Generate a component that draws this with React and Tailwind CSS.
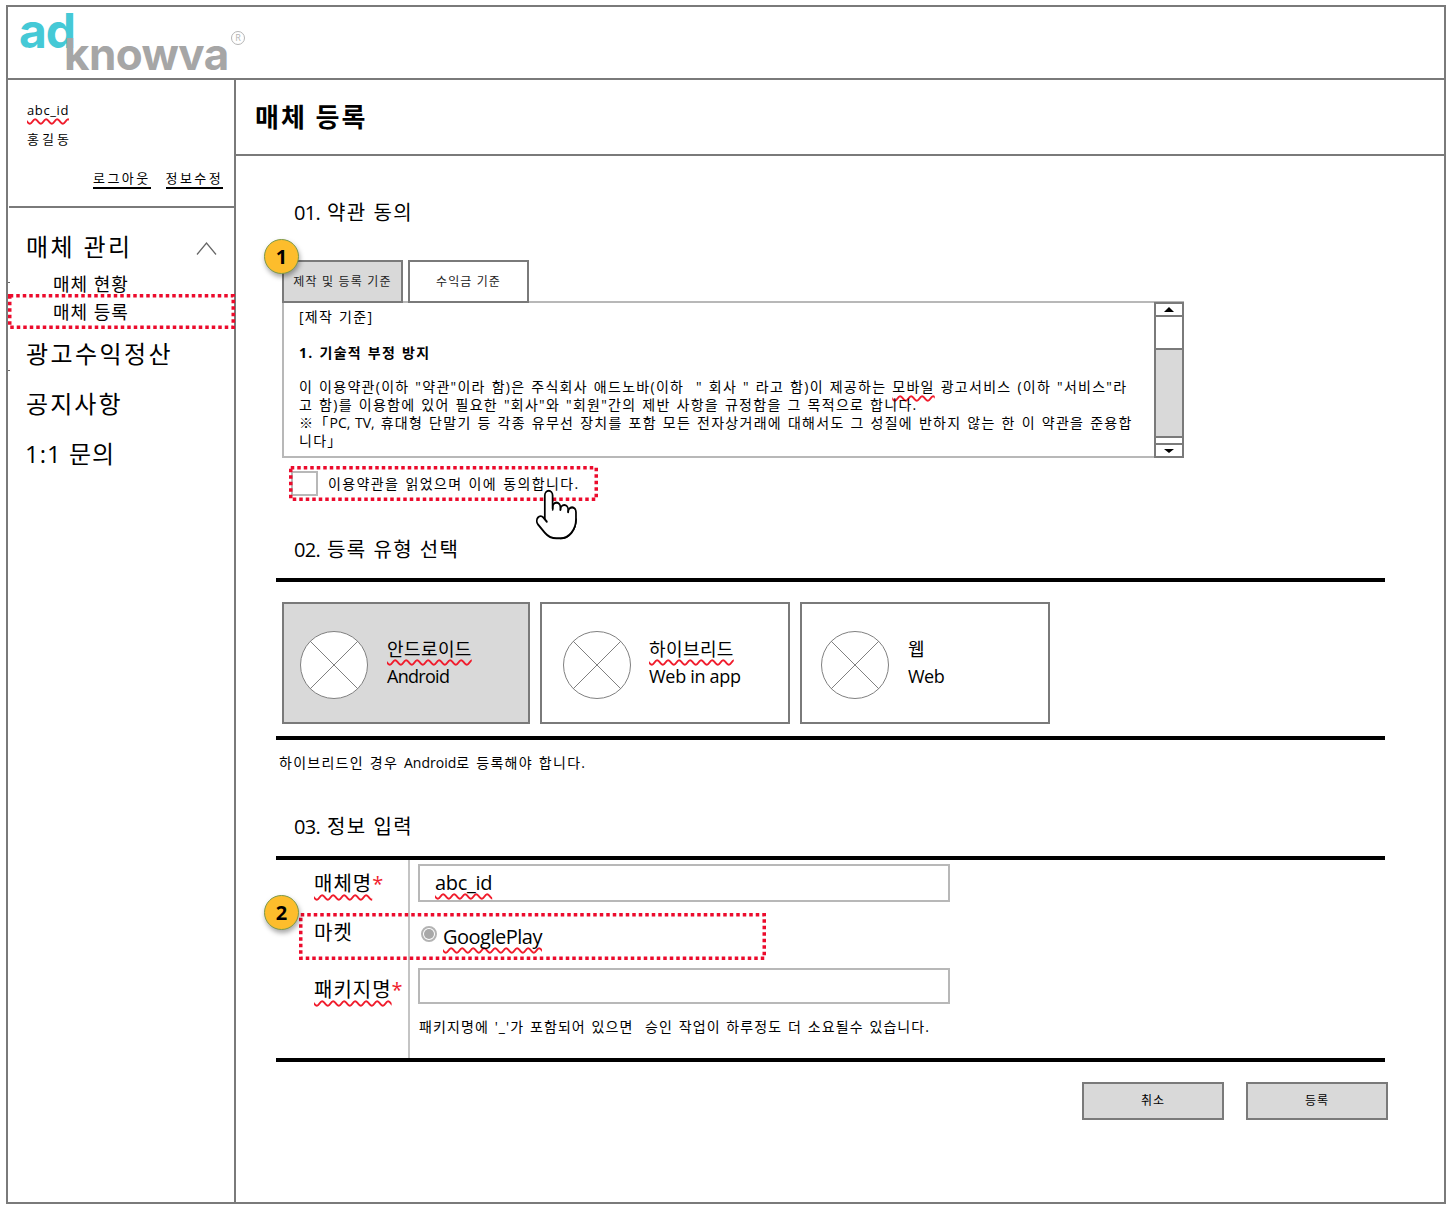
import React from "react";
import { Pointer } from "lucide-react";

const Wavy = ({ children }) => (
  <span className="underline decoration-wavy decoration-[#f01c2c] decoration-[1.5px] underline-offset-[3px] [text-decoration-skip-ink:none]">{children}</span>
);

const Dotted = ({ w, h, className }) => (
  <svg width={w} height={h} className={"absolute pointer-events-none " + className}>
    <rect x="1.75" y="1.75" width={w - 3.5} height={h - 3.5} fill="none" stroke="#ec0b2c" strokeWidth="3.5" strokeDasharray="3.5 3" />
  </svg>
);

const Badge = ({ n, className }) => (
  <div className={"absolute w-[35px] h-[35px] rounded-full bg-[#fdbd2c] border border-[#7d9a4a] flex items-center justify-center text-[20px] font-bold text-black shadow-[1px_3px_5px_rgba(0,0,0,0.35)] z-10 " + className}>{n}</div>
);

const Section = ({ num, children, className }) => (
  <h2 className={"ml-[58px] text-[20px] leading-[28px] tracking-[1.3px] [word-spacing:0.5px] text-black " + className}>
    <span className="tracking-[-0.7px]">{num}</span> {children}
  </h2>
);

const Thick = ({ className }) => <div className={"ml-[40px] w-[1109px] h-[4px] bg-black " + className} />;

const Placeholder = () => (
  <svg width="68" height="68" viewBox="0 0 68 68" className="shrink-0 mt-[3px]">
    <circle cx="34" cy="34" r="33.5" fill="#fff" stroke="#808080" />
    <line x1="10" y1="10" x2="58" y2="58" stroke="#808080" />
    <line x1="58" y1="10" x2="10" y2="58" stroke="#808080" />
  </svg>
);

const TypeCard = ({ ko, en, active, wavy, w, textGap, enTrack }) => (
  <div className={"h-[122px] border-2 border-[#7a7a7a] flex items-center " + w + " " + (active ? "bg-[#d9d9d9]" : "bg-white")}>
    <Placeholder />
    <div className={"text-[18px] leading-[27px] text-black " + textGap}>
      <div className="tracking-[0.4px]">{wavy ? <Wavy>{ko}</Wavy> : ko}</div>
      <div className={enTrack}>{en}</div>
    </div>
  </div>
);

const Label = ({ children, star }) => (
  <div className="text-[20px] leading-[28px] tracking-[1px] text-black">
    {star ? <Wavy>{children}</Wavy> : children}
    {star && <span className="text-[#f01c2c]">*</span>}
  </div>
);

export default function App() {
  return (
    <div className="w-[1452px] h-[1210px] pt-[5px] pl-[6px] bg-white overflow-hidden font-['Open_Sans','Noto_Sans_CJK_KR',sans-serif]">
      <div className="relative w-[1440px] h-[1199px] border-2 border-[#7a7a7a] flex flex-col">
        <header className="h-[73px] shrink-0 border-b-2 border-[#7a7a7a] relative">
          <div className="absolute left-[11px] top-[-4px] text-[48px] leading-[56px] font-bold tracking-[-1px] text-[#45c9d6] font-['Inter',sans-serif]">ad</div>
          <div className="absolute left-[56px] top-[21px] text-[44px] leading-[52px] font-bold tracking-[-0.6px] text-[#a6a6a6] font-['Inter',sans-serif]">knowva</div>
          <div className="absolute left-[223px] top-[24px] w-[14px] h-[14px] rounded-full border border-[#b5b5b5] text-[9px] leading-[12px] text-center text-[#b5b5b5]">R</div>
        </header>

        <div className="flex flex-1 min-h-0">
          <aside className="relative w-[228px] shrink-0 border-r-2 border-[#7a7a7a]">
            <div className="absolute left-0 top-[202px] w-[2px] h-px bg-[#666]" />
            <div className="absolute left-0 top-[290px] w-[2px] h-px bg-[#666]" />
            <div className="h-[128px] border-b-2 border-[#7a7a7a] ml-[1px] pl-[18px] pr-[11px] pt-[20px]">
              <div className="text-[13px] leading-[20px] tracking-[0.6px] text-black"><Wavy>abc_id</Wavy></div>
              <div className="mt-[9px] text-[13px] leading-[20px] tracking-[3px] text-black">홍길동</div>
              <div className="mt-[21px] flex justify-end gap-[15px] text-[13px] tracking-[2.4px] text-black">
                <span className="border-b-2 border-black leading-[17px]">로그아웃</span>
                <span className="border-b-2 border-black leading-[17px]">정보수정</span>
              </div>
            </div>
            <nav className="relative text-black">
              <div className="flex items-center justify-between pl-[18px] pr-[17px] pt-[22px]">
                <span className="text-[24px] leading-[34px] tracking-[2.4px]">매체 관리</span>
                <svg width="21" height="13" viewBox="0 0 21 13" className="mt-[2px] text-[#666]">
                  <polyline points="1,12.5 10.5,1 20,12.5" fill="none" stroke="currentColor" strokeWidth="1.2" />
                </svg>
              </div>
              <div className="pl-[45px] mt-[6px] text-[18px] leading-[28px] tracking-[1px]">매체 현황</div>
              <div className="pl-[45px] mt-0 text-[18px] leading-[28px] tracking-[1px]">매체 등록</div>
              <Dotted w={227} h={35} className="left-0 top-[86px]" />
              <div className="pl-[18px] mt-[11px] text-[24px] leading-[34px] tracking-[2.4px]">광고수익정산</div>
              <div className="pl-[18px] mt-[16px] text-[24px] leading-[34px] tracking-[2.1px]">공지사항</div>
              <div className="pl-[17px] mt-[16px] text-[24px] leading-[34px] tracking-[1px]">1:1 문의</div>
            </nav>
          </aside>

          <main className="relative flex-1 min-w-0">
            <div className="h-[76px] border-b-2 border-[#7a7a7a] pl-[19px] pt-[18px]">
              <h1 className="text-[26px] leading-[38px] font-bold tracking-[2px] text-black">매체 등록</h1>
            </div>

            <Section num="01." className="mt-[43px]">약관 동의</Section>

            <div className="relative ml-[46px] w-[902px] mt-[33px]">
              <Badge n="1" className="left-[-18px] top-[-21px]" />
              <div className="relative z-[1] flex gap-[5px] h-[43px]">
                <div className="w-[121px] border-2 border-[#7a7a7a] bg-[#d9d9d9] text-[12px] tracking-[1.2px] flex items-center justify-center text-[#222] whitespace-nowrap">제작 및 등록 기준</div>
                <div className="w-[121px] border-2 border-[#7a7a7a] bg-white text-[12px] tracking-[1.1px] flex items-center justify-center text-[#222] whitespace-nowrap">수익금 기준</div>
              </div>
              <div className="h-[157px] border-2 border-[#b8b8b8] flex relative -mt-[2px]">
                <div className="flex-1 min-w-0 pl-[15px] pt-[5px] text-[14px] leading-[18px] tracking-[1.28px] [word-spacing:1px] text-black">
                  <p>[제작 기준]</p>
                  <p className="mt-[18px] font-bold">1. 기술적 부정 방지</p>
                  <p className="mt-[16px] whitespace-nowrap">이 이용약관(이하 "약관"이라 함)은 주식회사 애드노바(이하 &nbsp;" 회사 " 라고 함)이 제공하는 <Wavy>모바일</Wavy> 광고서비스 (이하 "서비스"라</p>
                  <p className="whitespace-nowrap">고 함)를 이용함에 있어 필요한 "회사"와 "회원"간의 제반 사항을 규정함을 그 목적으로 합니다.</p>
                  <p className="whitespace-nowrap">※「<span className="tracking-normal">PC, TV,</span> 휴대형 단말기 등 각종 유무선 장치를 포함 모든 전자상거래에 대해서도 그 성질에 반하지 않는 한 이 약관을 준용합</p>
                  <p>니다」</p>
                </div>
                <div className="w-[30px] shrink-0 flex flex-col border-x-2 border-[#7a7a7a] -mt-[1px] -mb-[2px] -mr-[2px]">
                  <div className="h-[15px] border-y-2 border-[#7a7a7a] flex items-center justify-center">
                    <div className="w-0 h-0 border-x-[5px] border-x-transparent border-b-[5px] border-b-black" />
                  </div>
                  <div className="h-[31px]" />
                  <div className="h-[90px] bg-[#d9d9d9] border-y-2 border-[#7a7a7a]" />
                  <div className="h-[5px]" />
                  <div className="flex-1 border-y-2 border-[#7a7a7a] flex items-center justify-center">
                    <div className="w-0 h-0 border-x-[5px] border-x-transparent border-t-[4px] border-t-black" />
                  </div>
                </div>
              </div>
              <div className="relative h-[35px] w-[308px] ml-[7px] mt-[8px] flex items-center">
                <Dotted w={309} h={35} className="left-0 top-0" />
                <div className="ml-[2px] w-[27px] h-[25px] border-2 border-[#b8b8b8] bg-white" />
                <span className="ml-[10px] text-[14px] tracking-[1.4px] [word-spacing:1px] text-black whitespace-nowrap">이용약관을 읽었으며 이에 동의합니다.</span>
                <Pointer size={57} strokeWidth={0.9} className="absolute left-[239px] top-[20px] text-black fill-white scale-x-[0.82]" />
              </div>
            </div>

            <Section num="02." className="mt-[35px]">등록 유형 선택</Section>
            <Thick className="mt-[14px]" />
            <div className="ml-[46px] mt-[20px] flex gap-[10px]">
              <TypeCard ko="안드로이드" en="Android" active wavy w="w-[248px] pl-[16px]" textGap="ml-[19px]" enTrack="tracking-[-0.7px]" />
              <TypeCard ko="하이브리드" en="Web in app" wavy w="w-[250px] pl-[21px]" textGap="ml-[18px]" enTrack="tracking-[-0.3px]" />
              <TypeCard ko="웹" en="Web" w="w-[250px] pl-[19px]" textGap="ml-[19px]" enTrack="tracking-[-0.5px]" />
            </div>
            <Thick className="mt-[12px]" />
            <p className="ml-[43px] mt-[13px] text-[14px] leading-[20px] tracking-[1.27px] [word-spacing:1px] text-black whitespace-nowrap">하이브리드인 경우 <span className="tracking-normal">Android</span>로 등록해야 합니다.</p>

            <Section num="03." className="mt-[40px]">정보 입력</Section>
            <Thick className="mt-[15px]" />
            <div className="relative ml-[40px] w-[1109px] h-[198px] grid grid-cols-[134px_1fr] grid-rows-[53px_52px_1fr]">
              <Badge n="2" className="left-[-12px] top-[35px]" />
              <Dotted w={467} h={47} className="left-[23px] top-[53px]" />
              <div className="col-start-1 row-start-1 row-span-3 border-r-2 border-[#c4c4c4]" />
              <div className="col-start-1 row-start-1 pl-[38px] pt-[10px]"><Label star>매체명</Label></div>
              <div className="col-start-2 row-start-1 pl-[8px] pt-[4px]">
                <div className="w-[532px] h-[38px] border-2 border-[#b8b8b8] pl-[15px] text-[20px] leading-[34px] tracking-[-0.3px] text-black"><Wavy>abc_id</Wavy></div>
              </div>
              <div className="col-start-1 row-start-2 pl-[38px] pt-[6px]"><Label>마켓</Label></div>
              <div className="col-start-2 row-start-2 pl-[11px] pt-[10px] flex items-start gap-[6px]">
                <div className="mt-[3px] w-[16px] h-[16px] rounded-full border-2 border-[#b3b3b3] bg-white flex items-center justify-center">
                  <div className="w-[10px] h-[10px] rounded-full bg-[#a8a8a8]" />
                </div>
                <span className="text-[20px] leading-[28px] tracking-[-0.5px] text-black"><Wavy>GooglePlay</Wavy></span>
              </div>
              <div className="col-start-1 row-start-3 pl-[38px] pt-[11px]"><Label star>패키지명</Label></div>
              <div className="col-start-2 row-start-3 pl-[8px] pt-[3px]">
                <div className="w-[532px] h-[36px] border-2 border-[#b8b8b8]" />
                <p className="mt-[13px] ml-[1px] text-[14px] leading-[20px] tracking-[1.1px] [word-spacing:1px] text-black whitespace-nowrap">패키지명에 '_'가 포함되어 있으면 &nbsp;승인 작업이 하루정도 더 소요될수 있습니다.</p>
              </div>
            </div>
            <Thick />
            <div className="ml-[846px] mt-[20px] flex gap-[22px]">
              <button className="w-[142px] h-[38px] border-2 border-[#7a7a7a] bg-[#d9d9d9] text-[12px] tracking-[1px] text-black">취소</button>
              <button className="w-[142px] h-[38px] border-2 border-[#7a7a7a] bg-[#d9d9d9] text-[12px] tracking-[1px] text-black">등록</button>
            </div>
          </main>
        </div>
      </div>
    </div>
  );
}
